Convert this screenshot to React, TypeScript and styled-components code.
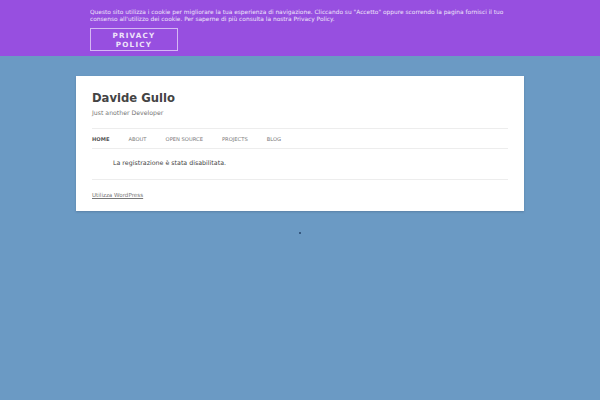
import styled, { createGlobalStyle } from "styled-components";

const Global = createGlobalStyle`
    html, body {
        margin: 0;
        padding: 0;
        background: #6b9ac4;
        font-family: "DejaVu Sans", "Liberation Sans", sans-serif;
    }
`

const Page = styled.div`
    width: 600px;
    height: 400px;
    background: #6b9ac4;
    position: relative;
    overflow: hidden;
`

const CookieBar = styled.div`
    background: #974fe0;
    height: 56px;
    padding: 9px 88px 0 90px;
    box-sizing: border-box;
    color: #f3ecfb;
`

const CookieText = styled.p`
    margin: 0;
    font-size: 5.88px;
    line-height: 7px;
    opacity: 0.95;
`

const PolicyButton = styled.div`
    margin-top: 5px;
    width: 88px;
    height: 23px;
    box-sizing: border-box;
    border: 1px solid rgba(255, 255, 255, 0.6);
    display: flex;
    flex-direction: column;
    align-items: center;
    justify-content: center;
    font-size: 7.2px;
    line-height: 9px;
    letter-spacing: 1.2px;
    font-weight: bold;
    color: #efe4fa;
`

const Card = styled.div`
    margin: 20px 0 0 76px;
    width: 448px;
    background: #fff;
    padding: 14px 16px 12px;
    box-sizing: border-box;
    box-shadow: 0 1px 2px rgba(60, 80, 110, 0.35);
`

const Title = styled.h1`
    margin: 0;
    font-size: 11.6px;
    line-height: 16px;
    font-weight: bold;
    color: #444;
`

const Tagline = styled.div`
    margin-top: 2px;
    font-size: 6.2px;
    line-height: 9px;
    color: #777;
`

const Nav = styled.nav`
    margin-top: 11px;
    border-top: 1px solid #ededed;
    border-bottom: 1px solid #ededed;
    height: 19px;
    display: flex;
    align-items: center;
`

const NavItem = styled.span<{ $active?: boolean }>`
    font-size: 5.2px;
    text-transform: uppercase;
    color: ${p => (p.$active ? "#555" : "#777")};
    font-weight: ${p => (p.$active ? "bold" : "normal")};
    margin-right: 19px;
`

const Content = styled.div`
    padding: 9px 0 12px 21px;
    border-bottom: 1px solid #ededed;
    font-size: 6.3px;
    line-height: 9px;
    color: #444;
`

const Footer = styled.div`
    padding-top: 11px;
    font-size: 5.6px;
    line-height: 8px;
    color: #777;
    text-decoration: underline;
`

const Dot = styled.div`
    position: absolute;
    left: 299px;
    top: 232px;
    width: 2px;
    height: 2px;
    background: #2b4a70;
    opacity: 0.8;
`

const App = () => {
    return (
        <Page>
            <Global />
            <CookieBar>
                <CookieText>
                    Questo sito utilizza i cookie per migliorare la tua esperienza di navigazione. Cliccando su "Accetto" oppure scorrendo la pagina fornisci il tuo consenso all'utilizzo dei cookie. Per saperne di più consulta la nostra Privacy Policy.
                </CookieText>
                <PolicyButton>
                    <span>PRIVACY</span>
                    <span>POLICY</span>
                </PolicyButton>
            </CookieBar>
            <Card>
                <Title>Davide Gullo</Title>
                <Tagline>Just another Developer</Tagline>
                <Nav>
                    <NavItem $active>Home</NavItem>
                    <NavItem>About</NavItem>
                    <NavItem>Open Source</NavItem>
                    <NavItem>Projects</NavItem>
                    <NavItem>Blog</NavItem>
                </Nav>
                <Content>La registrazione è stata disabilitata.</Content>
                <Footer>Utilizza WordPress</Footer>
            </Card>
            <Dot />
        </Page>
    )
}

export default App;
